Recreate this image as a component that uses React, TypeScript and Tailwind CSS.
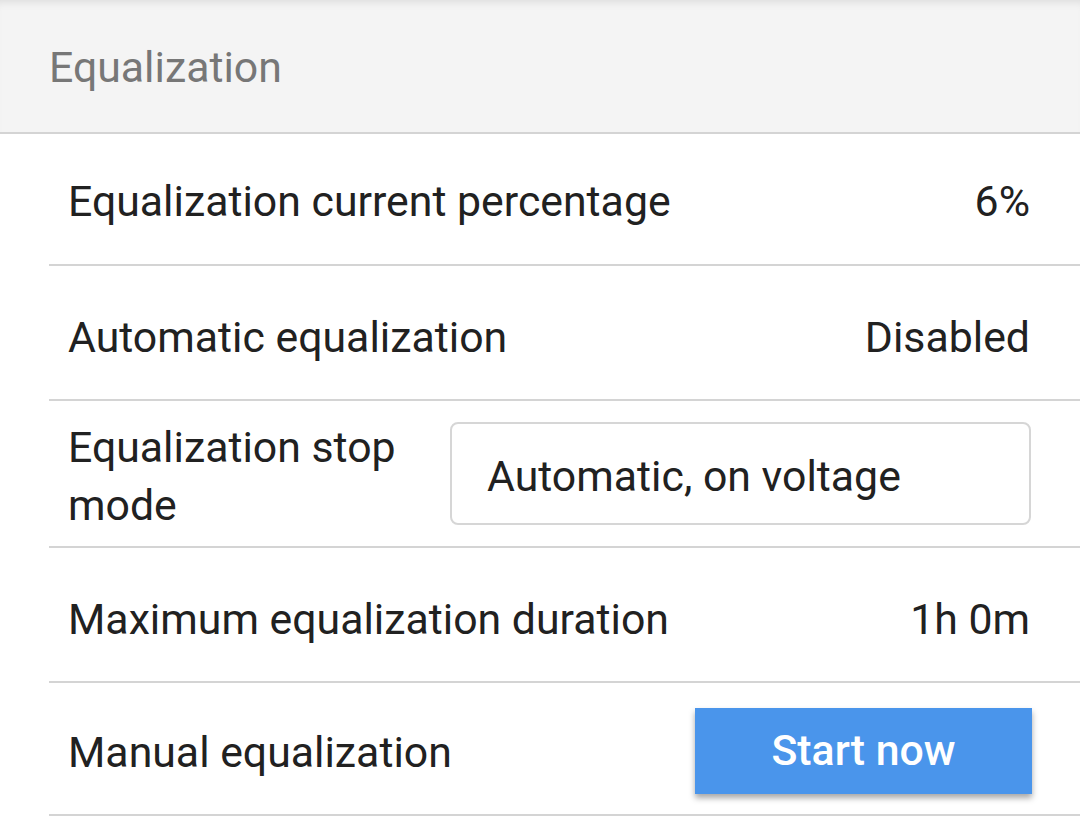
import React from "react";

export default function App() {
  return (
    <div className="w-[1080px] h-[816px] overflow-hidden bg-white font-['Roboto',sans-serif] text-[42.8px] text-[#212121]">
      <div className="h-[134px] bg-[#f4f4f4] border-b-2 border-[#d4d4d4] shadow-[inset_0_8px_8px_-6px_rgba(0,0,0,0.10)] flex items-center pl-[49px] pt-[2px]">
        <span className="text-[#777777]">Equalization</span>
      </div>
      <div className="ml-[49px]">
        <div className="h-[132px] border-b-2 border-[#d4d4d4] flex items-center justify-between pl-[19px] pr-[50px] pt-[5px]">
          <span>Equalization current percentage</span>
          <span>6%</span>
        </div>
        <div className="h-[135px] border-b-2 border-[#d4d4d4] flex items-center justify-between pl-[19px] pr-[50px] pt-[10px]">
          <span>Automatic equalization</span>
          <span>Disabled</span>
        </div>
        <div className="h-[147px] border-b-2 border-[#d4d4d4] flex items-center pl-[19px] pr-[49px]">
          <span className="w-[382px] shrink-0 leading-[58px] pt-[5px]">Equalization stop mode</span>
          <div className="flex-1 h-[103px] border-2 border-[#d6d6d6] rounded-[8px] flex items-center pl-[35px] pt-[6px]">
            <span>Automatic, on voltage</span>
          </div>
        </div>
        <div className="h-[135px] border-b-2 border-[#d4d4d4] flex items-center justify-between pl-[19px] pr-[50px] pt-[10px]">
          <span>Maximum equalization duration</span>
          <span>1h 0m</span>
        </div>
        <div className="h-[133px] border-b-2 border-[#d4d4d4] flex items-center justify-between pl-[19px] pr-[48px]">
          <span className="pt-[8px]">Manual equalization</span>
          <button className="w-[337px] h-[86px] mt-[4px] bg-[#4a95eb] shadow-[0_4px_6px_rgba(0,0,0,0.35)] text-white font-medium flex items-center justify-center">
            Start now
          </button>
        </div>
      </div>
    </div>
  );
}
